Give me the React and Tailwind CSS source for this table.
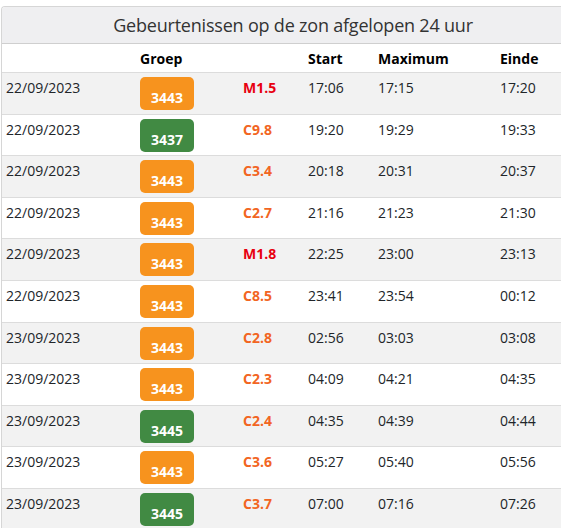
const rows = [
  { date: "22/09/2023", group: "3443", kind: "o", cls: "M1.5", start: "17:06", max: "17:15", end: "17:20" },
  { date: "22/09/2023", group: "3437", kind: "g", cls: "C9.8", start: "19:20", max: "19:29", end: "19:33" },
  { date: "22/09/2023", group: "3443", kind: "o", cls: "C3.4", start: "20:18", max: "20:31", end: "20:37" },
  { date: "22/09/2023", group: "3443", kind: "o", cls: "C2.7", start: "21:16", max: "21:23", end: "21:30" },
  { date: "22/09/2023", group: "3443", kind: "o", cls: "M1.8", start: "22:25", max: "23:00", end: "23:13" },
  { date: "22/09/2023", group: "3443", kind: "o", cls: "C8.5", start: "23:41", max: "23:54", end: "00:12" },
  { date: "23/09/2023", group: "3443", kind: "o", cls: "C2.8", start: "02:56", max: "03:03", end: "03:08" },
  { date: "23/09/2023", group: "3443", kind: "o", cls: "C2.3", start: "04:09", max: "04:21", end: "04:35" },
  { date: "23/09/2023", group: "3445", kind: "g", cls: "C2.4", start: "04:35", max: "04:39", end: "04:44" },
  { date: "23/09/2023", group: "3443", kind: "o", cls: "C3.6", start: "05:27", max: "05:40", end: "05:56" },
  { date: "23/09/2023", group: "3445", kind: "g", cls: "C3.7", start: "07:00", max: "07:16", end: "07:26" },
];

const grid = "grid grid-cols-[133px_103px_65px_70px_122px_1fr]";

const FlareRow = ({ row, index }) =>
{
  const striped = index % 2 === 0;
  return (
    <div className={`${grid} h-[41.6px] border-t border-[#dcdcdc] text-[14px] leading-[21px] text-[#212529] ${striped ? "bg-[#f2f2f2]" : "bg-white"}`}>
      <div className="pl-[4px] pt-[4px]">{row.date}</div>
      <div className="pl-[5px] pt-[4px]">
        <span className={`flex w-[54px] h-[33px] items-end justify-center pb-[5px] rounded-[5px] text-white font-bold text-[14px] leading-none ${row.kind === "g" ? "bg-[#418a43]" : "bg-[#f7931e]"}`}>
          {row.group}
        </span>
      </div>
      <div className={`pl-[5px] pt-[4px] font-bold ${row.cls.startsWith("M") ? "text-[#e8000f]" : "text-[#f26522]"}`}>{row.cls}</div>
      <div className="pl-[5px] pt-[4px]">{row.start}</div>
      <div className="pl-[5px] pt-[4px]">{row.max}</div>
      <div className="pl-[5px] pt-[4px]">{row.end}</div>
    </div>
  );
};

export default function App()
{
  return (
    <div className="w-[561px] h-[528px] overflow-hidden bg-white font-['Open_Sans',sans-serif]">
      <div className="ml-px mt-[6px] w-[583px] border-l border-t border-[#d6d6d6] rounded-tl-[4px] overflow-hidden">
        <div className="h-[36px] bg-[#efeff1] flex items-center justify-center text-[18px] text-[#333] tracking-[-0.2px]">
          Gebeurtenissen op de zon afgelopen 24 uur
        </div>
        <div className={`${grid} h-[29px] border-t border-[#cfcfcf] bg-white text-[14px] font-bold text-black items-center`}>
          <div></div>
          <div className="pl-[5px]">Groep</div>
          <div></div>
          <div className="pl-[5px]">Start</div>
          <div className="pl-[5px]">Maximum</div>
          <div className="pl-[5px]">Einde</div>
        </div>
        {rows.map((row, i) => (
          <FlareRow key={i} row={row} index={i} />
        ))}
      </div>
    </div>
  );
}
